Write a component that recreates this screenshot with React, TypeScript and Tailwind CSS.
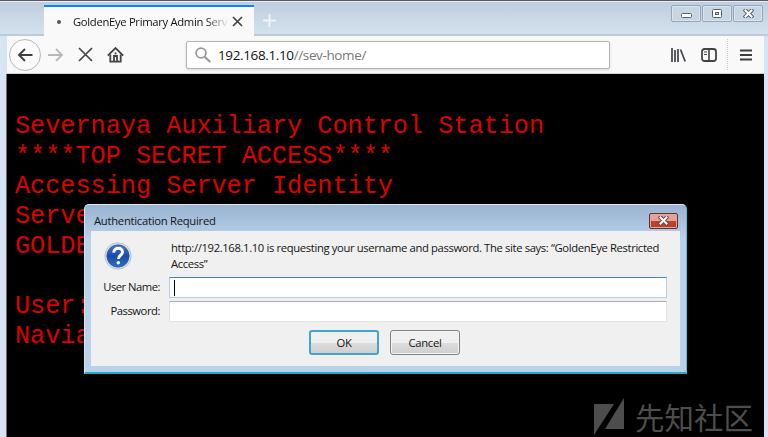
import type { ReactNode } from "react";

const ui = "font-['Open_Sans','Noto_Sans',sans-serif]";

function CaptionButton({ children }: { children: ReactNode }) {
  return (
    <div className="flex h-[17px] w-[30px] items-center justify-center rounded-[2px] border border-[#94a5bd] bg-[#c8d5e3] shadow-[inset_0_0_0_1px_#d9e4ef]">
      {children}
    </div>
  );
}

function CloseGlyph({ outline, size }: { outline: string; size: number }) {
  return (
    <svg width={size} height={size * 0.82} viewBox="0 0 11 9" fill="none">
      <path d="M2.5 1.5l6 6M8.5 1.5l-6 6" stroke={outline} strokeWidth="4" strokeLinecap="square" />
      <path d="M2.5 1.5l6 6M8.5 1.5l-6 6" stroke="#fff" strokeWidth="2" strokeLinecap="square" />
    </svg>
  );
}

function TitleBar() {
  return (
    <div className="flex h-[34px] items-start border-b-2 border-[#bdcbd9] bg-linear-to-b from-[#c0cddc] to-[#d3e2ef] pl-[44px]">
      <div className="mt-[3px] -mb-[2px] flex h-[31px] w-[210px] shrink-0 items-center border-t-2 border-[#0a84ff] bg-[#f9f9fa] pl-[13px]">
        <span className="h-[4px] w-[4px] shrink-0 rounded-full bg-[#555]" />
        <span className={`${ui} ml-[12px] w-[156px] whitespace-nowrap bg-linear-to-r from-[#111] from-85% to-transparent bg-clip-text text-[11.25px] leading-[18px] tracking-[-0.31px] text-transparent`}>
          GoldenEye Primary Admin Serv
        </span>
        <svg className="ml-[3px]" width="11" height="11" viewBox="0 0 11 11" fill="none" stroke="#444" strokeWidth="1.7">
          <path d="M1 1l9 9M10 1l-9 9" />
        </svg>
      </div>
      <svg className="mt-[12px] ml-[9px]" width="13" height="13" viewBox="0 0 13 13" stroke="#eef4f9" strokeWidth="1.8">
        <path d="M6.5 0v13M0 6.5h13" />
      </svg>
      <div className="mt-[3px] ml-auto flex gap-px pr-[5px]">
        <CaptionButton>
          <svg className="mt-[3px]" width="11" height="5" viewBox="0 0 11 5"><rect x=".5" y=".5" width="10" height="4" rx="1" fill="#fff" stroke="#59616e" /></svg>
        </CaptionButton>
        <CaptionButton>
          <svg width="10" height="9" viewBox="0 0 10 9"><rect x=".5" y=".5" width="9" height="8" rx="1" fill="#fff" stroke="#59616e" /><rect x="3.5" y="3.5" width="3" height="2" fill="#c8d5e3" stroke="#59616e" /></svg>
        </CaptionButton>
        <CaptionButton><CloseGlyph outline="#59616e" size={11} /></CaptionButton>
      </div>
    </div>
  );
}

function Toolbar() {
  return (
    <div className="mr-[4px] ml-[7px] flex h-[38px] items-center border-b border-[#cfcfcf] bg-[#f9f9fa]">
      <div className="ml-[2px] flex h-[32px] w-[32px] items-center justify-center rounded-full border border-[#b9b9ba] bg-[#fcfcfc]">
        <svg width="16" height="14" viewBox="0 0 16 14" fill="none" stroke="#3f3f42" strokeWidth="1.9"><path d="M15.5 7H2M8 1L2 7l6 6" /></svg>
      </div>
      <svg className="ml-[7px]" width="16" height="14" viewBox="0 0 16 14" fill="none" stroke="#b8b8ba" strokeWidth="1.8"><path d="M0 7h14M8 1l6 6-6 6" /></svg>
      <svg className="ml-[14px]" width="15" height="15" viewBox="0 0 15 15" fill="none" stroke="#444447" strokeWidth="1.7"><path d="M1 1l13 13M14 1L1 14" /></svg>
      <svg className="ml-[14px]" width="17" height="16" viewBox="0 0 17 16" fill="none" stroke="#444447" strokeWidth="1.8">
        <path d="M.8 8.6L8.5 1l7.7 7.6" /><path d="M3.3 7.5v7.2h10.4V7.5" /><path d="M7 15V9h3v6" /><path d="M8.5 5.4v2" />
      </svg>
      <div className="ml-[62px] flex h-[28px] w-[424px] items-center rounded-[2px] border border-[#b4b4b5] bg-white pl-[8px] shadow-[0_1px_3px_rgba(0,0,0,0.12)]">
        <svg width="16" height="16" viewBox="0 0 16 16" fill="none" stroke="#98989a" strokeWidth="1.8"><circle cx="6" cy="6" r="4.9" /><path d="M9.7 9.7l5.5 5.3" strokeWidth="2.1" /></svg>
        <span className={`${ui} mt-px ml-[7px] whitespace-nowrap text-[13.5px] tracking-[-0.37px] text-[#777]`}>
          <span className="text-[#111]">192.168.1.10</span>//sev-home/
        </span>
      </div>
      <div className="ml-auto flex items-center">
        <svg width="15" height="14" viewBox="0 0 15 14" fill="none" stroke="#444447" strokeWidth="1.7"><path d="M1 0v14M4 2v12M7 1v13M9.5 1.5l4.7 12" /></svg>
        <svg className="ml-[15px]" width="16" height="14" viewBox="0 0 16 14" fill="none" stroke="#444447">
          <rect x="1" y="1" width="14" height="12" rx="2.5" strokeWidth="1.8" /><path d="M8 1v12" strokeWidth="1.6" /><path d="M3 4h3M3 6.5h3" strokeWidth="1" />
        </svg>
        <div className="ml-[10px] h-[31px] border-l border-dotted border-[#ccc]" />
        <svg className="mr-[12px] ml-[12px]" width="12" height="12" viewBox="0 0 12 12" stroke="#3e3e41" strokeWidth="1.8"><path d="M0 1.5h12M0 6h12M0 10.5h12" /></svg>
      </div>
    </div>
  );
}

function AuthDialog() {
  return (
    <div className={`${ui} absolute top-[203px] left-[84px] flex h-[170px] w-[603px] flex-col rounded-t-[5px] border border-[#dbe8f2] border-r-[#50c3dc] border-b-2 border-b-[#27a9c4] bg-linear-to-b from-[#99b4d1] via-[#b9d1ea] via-20% to-[#b9d1ea] px-[6px] pb-[6px] text-[11.25px] text-[#151515]`}>
      <div className="flex h-[26px] shrink-0 items-center justify-between pr-[2px] pl-[3px]">
        <span className="mt-[6px] whitespace-nowrap tracking-[-0.27px]">Authentication Required</span>
        <div className="mt-[6px] flex h-[16px] w-[29px] items-center justify-center rounded-[2px] border border-[#632d32] bg-linear-to-b from-[#e5a294] from-50% to-[#bd402b] to-50% shadow-[inset_0_0_0_1px_#e2a89b]">
          <CloseGlyph outline="#67484a" size={11} />
        </div>
      </div>
      <div className="flex flex-1 flex-col bg-[#f0f0f0] pr-[13px] pl-[13px]">
        <div className="flex h-[46px] items-start">
          <svg className="mt-[11px] shrink-0" width="28" height="28" viewBox="0 0 28 28">
            <defs><linearGradient id="help" x2="0" y2="1"><stop stopColor="#4479ce" /><stop offset=".5" stopColor="#1b4baa" /><stop offset="1" stopColor="#2870ca" /></linearGradient></defs>
            <circle cx="14" cy="14" r="13.2" fill="#e0e0df" stroke="#b8b8b8" strokeWidth=".8" />
            <circle cx="14" cy="14" r="11.2" fill="url(#help)" stroke="#2153a5" strokeWidth=".6" />
            <path d="M9.7 10.6c.2-5.9 9-5.6 8.8-.5-.1 3-4.1 3.3-4.1 6.9" fill="none" stroke="#fff" strokeWidth="2.9" />
            <circle cx="14.3" cy="20.8" r="1.8" fill="#fff" />
          </svg>
          <div className="mt-[9px] ml-[39px] whitespace-nowrap leading-[16px] tracking-[-0.36px]">
            <p>http://192.168.1.10 is requesting your username and password. The site says: “GoldenEye Restricted</p>
            <p>Access”</p>
          </div>
        </div>
        <label className="flex items-center">
          <span className="flex w-[56px] justify-end whitespace-nowrap tracking-[-0.5px]">User Name:</span>
          <span className="ml-[9px] flex h-[21px] flex-1 items-center border border-[#b5cfe7] border-t-[#4385b8] bg-white pl-[4px]">
            <span className="h-[16px] w-px bg-black" />
          </span>
        </label>
        <label className="mt-[3px] flex items-center">
          <span className="flex w-[56px] justify-end whitespace-nowrap tracking-[-0.45px]">Password:</span>
          <span className="ml-[9px] h-[21px] flex-1 border border-[#e2e3ea] border-t-[#abadb3] bg-white" />
        </label>
        <div className="mt-[8px] flex gap-[11px] pl-[205px]">
          <button className="h-[25px] w-[70px] rounded-[3px] border-2 border-[#43a5cf] bg-linear-to-b from-[#f0f0f0] from-50% via-[#dddddd] via-50% to-[#cfcfcf] leading-[16px] tracking-[-0.3px]">OK</button>
          <button className="h-[25px] w-[70px] rounded-[3px] border border-[#818181] bg-linear-to-b from-[#f0f0f0] from-50% via-[#dddddd] via-50% to-[#cfcfcf] leading-[16px] tracking-[-0.3px] shadow-[inset_0_0_0_1px_#f5f5f5]">Cancel</button>
        </div>
      </div>
    </div>
  );
}

const lines = ["Severnaya Auxiliary Control Station", "****TOP SECRET ACCESS****", "Accessing Server Identity", "Serve", "GOLDE", "", "User:", "Navia"];

export default function App() {
  return (
    <div className="relative flex h-[437px] w-[768px] flex-col overflow-hidden border-t-[1px] border-[#5a5961] bg-[#d7e4f2]">
      <div className="h-px shrink-0 bg-[#e8eef4]" />
      <TitleBar />
      <Toolbar />
      <main className="mr-[4px] ml-[6px] flex-1 overflow-hidden border-l border-[#65717a] bg-black pt-[38px] pl-[8px] font-['Courier_New','Liberation_Mono',monospace] text-[25.2px] leading-[30px] text-[#dc0000]">
        {lines.map((line, i) => <p key={i} className="h-[30px] whitespace-pre">{line}</p>)}
      </main>
      <AuthDialog />
      <div className="absolute top-[396px] left-[593px] flex items-center gap-[10px] text-[#4d4d4d]">
        <svg width="32" height="38" viewBox="0 0 32 38" fill="currentColor"><path d="M1 7h20L1 38zM31 1v31H12z" /></svg>
        <span className="whitespace-nowrap font-['Noto_Sans_CJK_SC',sans-serif] text-[29.5px] leading-[34px]">先知社区</span>
      </div>
    </div>
  );
}
